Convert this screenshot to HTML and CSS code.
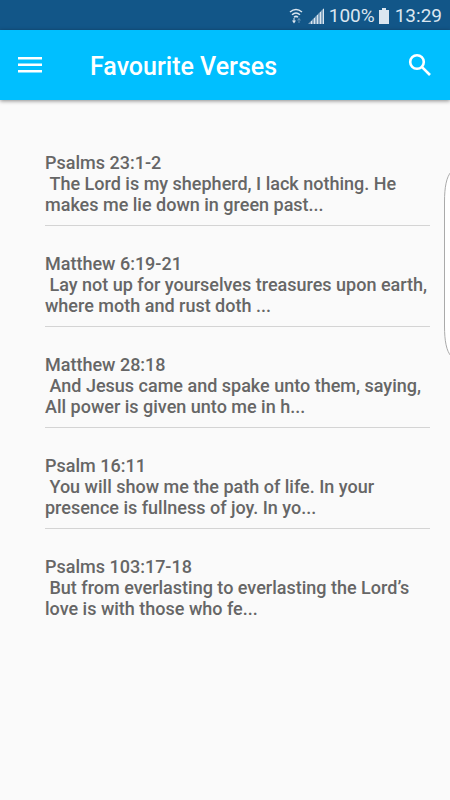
FILE: index.html
```html
<!DOCTYPE html>
<html lang="en">
<head>
<meta charset="utf-8">
<meta name="viewport" content="width=device-width, initial-scale=1">
<title>Favourite Verses</title>
<link rel="stylesheet" href="styles.css">
</head>
<body>
<div class="status">
  <svg class="status-wifi" width="14" height="18" viewBox="0 0 14 18" fill="none" stroke="currentColor" stroke-width="1.500" aria-hidden="true">
    <path d="M1 5Q7 0 13 5M3 7.800Q7 4.300 11 7.800M5 10.200Q7 8.500 9 10.200"/>
    <path d="M3 13.500h4L5 16.500zM4.500 11h1v3h-1z" fill="currentColor" stroke="none"/>
    <path d="M8 13.500h4l-2-3zM9.500 13h1v3h-1z" fill="currentColor" stroke="none" opacity=".4"/>
  </svg>
  <svg class="status-signal" width="16" height="16" viewBox="0 0 16 16" fill="currentColor" aria-hidden="true">
    <path d="M0 16L16 0V16z" opacity=".55"/>
    <path d="M3 13h1v3H3zM6 10h1v6H6zM9 7h1v9H9zM12 4h1v12h-1zM15 1h1v15h-1z"/>
  </svg>
  <span class="status-percent">100%</span>
  <svg class="status-battery" width="10" height="16" viewBox="0 0 10 16" fill="currentColor" aria-hidden="true"><path d="M3 0h4v2h3v14H0V2h3z"/></svg>
  <span>13:29</span>
</div>
<header class="toolbar">
  <button class="icon-button" type="button" aria-label="Menu">
    <svg width="24" height="18" viewBox="0 0 24 18" fill="currentColor"><path d="M0 1h24v2.600H0zM0 7.500h24v2.600H0zM0 14h24v2.600H0z"/></svg>
  </button>
  <h1 class="title">Favourite Verses</h1>
  <button class="icon-button" type="button" aria-label="Search">
    <svg width="24" height="24" viewBox="0 0 24 24" fill="none" stroke="currentColor" stroke-width="2.600"><circle cx="9" cy="9" r="6.800"/><path d="M13.800 13.800L22 22"/></svg>
  </button>
</header>
<main>
  <ul class="verses">
    <li class="verse"><h2 class="reference">Psalms 23:1-2</h2><p class="excerpt">&nbsp;The Lord is my shepherd, I lack nothing. He makes me lie down in green past...</p></li>
    <li class="verse"><h2 class="reference">Matthew 6:19-21</h2><p class="excerpt">&nbsp;Lay not up for yourselves treasures upon earth, where moth and rust doth ...</p></li>
    <li class="verse"><h2 class="reference">Matthew 28:18</h2><p class="excerpt">&nbsp;And Jesus came and spake unto them, saying, All power is given unto me in h...</p></li>
    <li class="verse"><h2 class="reference">Psalm 16:11</h2><p class="excerpt">&nbsp;You will show me the path of life. In your presence is fullness of joy. In yo...</p></li>
    <li class="verse"><h2 class="reference">Psalms 103:17-18</h2><p class="excerpt">&nbsp;But from everlasting to everlasting the Lord’s love is with those who fe...</p></li>
  </ul>
</main>
<svg class="edge-handle" width="6" height="188" viewBox="0 0 6 188" fill="#fff" stroke="#aaa" aria-hidden="true"><path d="M7 2C2.500 7 .5 17 .5 32V156C.5 171 2.500 181 7 186"/></svg>
</body>
</html>
```

FILE: styles.css
```css
* {
  box-sizing: border-box;
}

body {
  margin: 0;
  min-height: 100vh;
  background: #fafafa;
  color: #666;
  font-family: Roboto, sans-serif;
}

h1, h2, p, ul {
  margin: 0;
  padding: 0;
}

svg {
  display: block;
}

.status {
  display: flex;
  align-items: center;
  justify-content: flex-end;
  height: 30px;
  padding: 2px 8px 0 0;
  background: #125688;
  color: #dbe6f0;
  font-size: 19px;
  line-height: 28px;
}

.status-wifi {
  margin-right: 5px;
}

.status-signal {
  margin-right: 5px;
}

.status-battery {
  margin: 0 6px 0 4px;
}

.toolbar {
  display: flex;
  align-items: center;
  height: 70px;
  padding: 0 12px;
  background: #00bfff;
  color: #fff;
  box-shadow: 0 1px 4px rgba(0, 0, 0, 0.45);
}

.icon-button {
  display: flex;
  align-items: center;
  justify-content: center;
  width: 36px;
  height: 36px;
  padding: 0;
  border: 0;
  background: none;
  color: inherit;
}

.title {
  flex: 1;
  margin-left: 42px;
  padding-top: 4px;
  font-size: 25px;
  font-weight: 500;
  line-height: 32px;
}

.verses {
  padding: 25px 20px 25px 45px;
  list-style: none;
}

.verse {
  padding: 27px 0 10px;
  border-bottom: 1px solid #d4d4d4;
  font-size: 18px;
  line-height: 21px;
}

.verse:last-child {
  border-bottom: 0;
}

.reference,
.excerpt {
  font-size: inherit;
  font-weight: 500;
}

.edge-handle {
  position: absolute;
  top: 170px;
  right: 0;
}
```
